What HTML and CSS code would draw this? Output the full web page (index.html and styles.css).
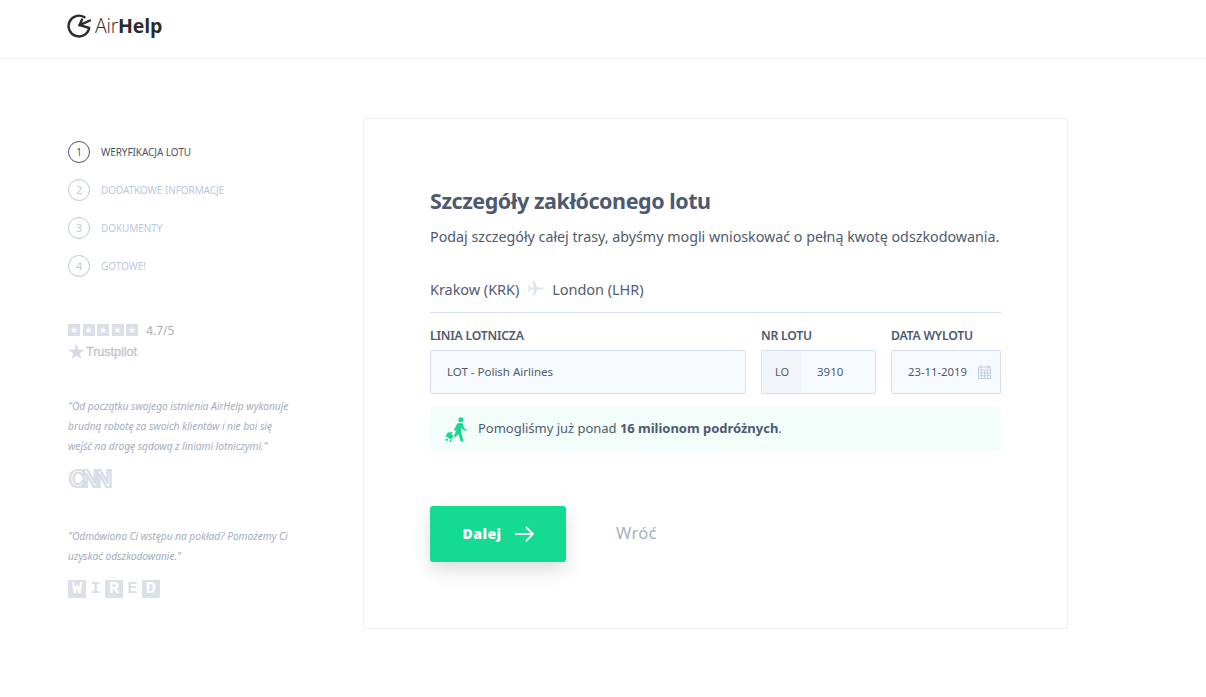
FILE: index.html
```html
<!DOCTYPE html>
<html lang="pl">
<head>
<meta charset="utf-8">
<title>AirHelp</title>
<link rel="stylesheet" href="styles.css">
</head>
<body>
<header class="topbar">
  <div class="logo">
    <svg class="logo-mark" width="24" height="24" viewBox="0 0 24 24" fill="none" stroke="#2b2b30" stroke-width="2.4" stroke-linecap="round" stroke-linejoin="round"><path d="M17.5 3.2A10.4 10.4 0 1 0 22.2 14"/><path d="M23 6.5 12.5 11.2 15 5.5"/><path d="M12.5 11.2 21 13.5"/></svg>
    <span class="logo-text"><span class="logo-light">Air</span><b>Help</b></span>
  </div>
</header>
<main class="page">
  <aside class="side">
    <ol class="steps">
      <li class="step active"><span class="num">1</span><span>WERYFIKACJA LOTU</span></li>
      <li class="step"><span class="num">2</span><span>DODATKOWE INFORMACJE</span></li>
      <li class="step"><span class="num">3</span><span>DOKUMENTY</span></li>
      <li class="step"><span class="num">4</span><span>GOTOWE!</span></li>
    </ol>
    <div class="rating">
      <span class="stars">
        <i class="star">★</i><i class="star">★</i><i class="star">★</i><i class="star">★</i><i class="star">★</i>
      </span>
      <span class="score">4.7/5</span>
    </div>
    <div class="trustpilot"><span class="tp-star">★</span><span>Trustpilot</span></div>
    <p class="quote first">"Od początku swojego istnienia AirHelp wykonuje brudną robotę za swoich klientów i nie boi się wejść na drogę sądową z liniami lotniczymi."</p>
    <div class="cnn">CNN</div>
    <p class="quote">"Odmówiono Ci wstępu na pokład? Pomożemy Ci uzyskać odszkodowanie."</p>
    <div class="wired"><span class="inv">W</span><span>I</span><span class="inv">R</span><span>E</span><span class="inv">D</span></div>
  </aside>
  <section class="card">
    <h1 class="title">Szczegóły zakłóconego lotu</h1>
    <p class="lead">Podaj szczegóły całej trasy, abyśmy mogli wnioskować o pełną kwotę odszkodowania.</p>
    <div class="route">
      <span>Krakow (KRK)</span>
      <svg class="plane" width="17" height="17" viewBox="0 0 18 18" fill="#dbe5ee"><path d="M17.500 9c0-.7-1-1.100-2-1.100h-4.200L7.200.4H5.700l2 7.500H3.600L2 5.600H.8L1.800 9l-1 3.400H2l1.600-2.300h4.100l-2 7.500h1.500l4.100-7.500h4.200c1 0 2-.4 2-1.100z"/></svg>
      <span>London (LHR)</span>
    </div>
    <div class="fields">
      <div class="field airline">
        <label class="label">LINIA LOTNICZA</label>
        <div class="input"><span class="value">LOT - Polish Airlines</span></div>
      </div>
      <div class="field flight">
        <label class="label">NR LOTU</label>
        <div class="input split"><span class="prefix">LO</span><span class="value">3910</span></div>
      </div>
      <div class="field date">
        <label class="label">DATA WYLOTU</label>
        <div class="input dated"><span class="value">23-11-2019</span>
          <svg class="cal" width="13" height="14" viewBox="0 0 13 14" fill="none" stroke="#c3d0e2"><rect x=".5" y="2" width="12" height="11.500"/><path d="M.5 5h12M.5 8h12M.5 10.800h12M3.500 5v8.500M6.500 5v8.500M9.500 5v8.500"/><path d="M3 .5v3M10 .5v3" stroke-width="1.600"/></svg>
        </div>
      </div>
    </div>
    <div class="notice">
      <svg class="walker" width="22" height="25" viewBox="0 0 22 25" fill="#17d88f"><circle cx="16" cy="2.800" r="2.600"/><path d="M12.500 6.200h5.300l1.300 5 2.700 1.300-.7 1.600-3.500-1.500-.9-2-.5 4.300 2.300 9.600h-2.800l-2.200-7.600-2.900 3.400-1.700-1.300 2.800-6.200-1.500 1.200-1.300-1z"/><path d="M5.700 14.500l1.800 1.200-1 1.500 2.300 1.500-2.700 4-5.600-3.700 2.700-4 1.500 1z"/><circle cx="1.800" cy="22.800" r="1.200"/><circle cx="5.500" cy="24" r="1"/></svg>
      <span>Pomogliśmy już ponad <b>16 milionom podróżnych</b>.</span>
    </div>
    <div class="actions">
      <button class="next" type="button">Dalej
        <svg width="19" height="16" viewBox="0 0 19 16" fill="none" stroke="#fff" stroke-width="1.800" stroke-linecap="round" stroke-linejoin="round"><path d="M1 8h17M11.500 1.500 18 8l-6.500 6.500"/></svg>
      </button>
      <a class="back">Wróć</a>
    </div>
  </section>
</main>
</body>
</html>
```
FILE: styles.css
```css
* { box-sizing: border-box; }
html, body { margin: 0; padding: 0; }
body {
  background: #fff;
  color: #4e5a70;
  font-family: "Noto Sans", "Open Sans", sans-serif;
  height: 697px;
  overflow: hidden;
}
.topbar {
  height: 59px;
  border-bottom: 1px solid #f0f1f3;
  padding: 14px 0 0 67px;
}
.logo { display: flex; align-items: center; gap: 4px; height: 24px; }
.logo-text { font-family: "Open Sans", sans-serif; font-size: 19.500px; color: #2b2b30; letter-spacing: -.2px; line-height: 24px; }
.logo-light { font-weight: 300; }
.logo-text b { font-weight: 700; }
.page {
  display: flex;
  padding: 59px 0 0 68px;
}
.side { width: 295px; padding-top: 23px; flex: none; }
.steps { list-style: none; margin: 0; padding: 0; display: flex; flex-direction: column; gap: 16px; }
.step {
  display: flex;
  align-items: center;
  gap: 11px;
  height: 22px;
  font-size: 10px;
  letter-spacing: -.08px;
  color: #bcc8dc;
}
.num {
  width: 22px; height: 22px;
  border: 1px solid #bcc8dc;
  border-radius: 50%;
  display: flex; align-items: center; justify-content: center;
  font-size: 10px;
  flex: none;
}
.step.active { color: #4b5365; }
.step.active .num { border-color: #4b5365; }
.rating { display: flex; align-items: center; margin-top: 46px; height: 14px; }
.stars { display: flex; gap: 2.500px; }
.star {
  width: 12px; height: 12px;
  background: #dbe0e8;
  color: #fff;
  font-style: normal;
  font-size: 9px;
  line-height: 12px;
  text-align: center;
  font-family: "DejaVu Sans", sans-serif;
}
.score { margin-left: 8px; font-size: 12px; color: #a9aeb8; letter-spacing: .05px; }
.trustpilot { display: flex; align-items: center; margin-top: 6px; height: 18px; font-size: 12.500px; color: #bfc4cc; font-family: "Liberation Sans", sans-serif; font-weight: 400; -webkit-text-stroke: .3px #bfc4cc; }
.tp-star { font-size: 21px; color: #d5dbe4; font-family: "DejaVu Sans", sans-serif; width: 19px; line-height: 18px; margin-left: -1px; -webkit-text-stroke: 0; }
.quote {
  margin: 0;
  width: 225px;
  font-size: 10.300px;
  line-height: 20px;
  font-style: italic;
  color: #a3aebf;
  letter-spacing: -.08px;
}
.quote.first { margin-top: 35px; }
.cnn {
  margin: 11px 0 35px;
  height: 24px;
  font: 700 24px/24px "Liberation Sans", sans-serif;
  color: #fff;
  -webkit-text-stroke: 2.200px #d8dee8;
  letter-spacing: -4.400px;
  padding-left: 1px;
}
.wired { display: flex; height: 18px; margin-top: 14px; width: 92px; font: 700 17px/18px "Liberation Mono", monospace; }
.wired span { flex: 1; text-align: center; color: #dbe1e9; }
.wired .inv { background: #dbe1e9; color: #fff; }
.card {
  width: 705px;
  height: 511px;
  border: 1px solid #edeff5;
  border-radius: 2px;
  padding: 67px 66px 0;
}
.title { margin: 0; font-size: 21.500px; line-height: 30px; font-weight: 700; color: #4e5a70; letter-spacing: -.45px; }
.lead { margin: 9px 0 0; font-size: 14.310px; line-height: 24px; color: #4e5a70; letter-spacing: -.02px; white-space: nowrap; }
.route {
  margin-top: 28px;
  height: 36px;
  padding-top: 2px;
  border-bottom: 1px solid #d5e0ee;
  display: flex;
  align-items: flex-start;
  gap: 8px;
  font-size: 14.500px;
  line-height: 20px;
  color: #525d70;
  letter-spacing: -.05px;
}
.plane { margin-top: 1px; }
.fields { display: flex; gap: 15px; margin-top: 14px; }
.field { display: flex; flex-direction: column; }
.airline { width: 316px; }
.flight { width: 115px; }
.date { width: 110px; }
.label { font-size: 12.200px; line-height: 18px; font-weight: 600; color: #4e5a70; letter-spacing: -.2px; margin-bottom: 5px; white-space: nowrap; }
.input {
  height: 44px;
  background: #f7fafe;
  border: 1px solid #d3e0f2;
  border-radius: 2px;
  display: flex;
  align-items: center;
  font-size: 11.500px;
  color: #4e5a70;
  padding-left: 16px;
}
.input .value { margin-top: -2px; }
.split { padding-left: 0; }
.prefix { width: 40px; height: 100%; background: #f2f5fa; display: flex; align-items: center; justify-content: center; font-size: 11px; padding-bottom: 2px; }
.split .value { margin-left: 15px; }
.dated { justify-content: space-between; padding-right: 9px; font-size: 11.300px; }
.notice {
  margin-top: 13px;
  height: 44px;
  background: #f3fefb;
  border-radius: 2px;
  display: flex;
  align-items: center;
  gap: 11px;
  padding-left: 15px;
  font-size: 13px;
  color: #4e5a70;
  letter-spacing: -.02px;
}
.notice span { margin-top: -2px; }
.notice b { font-weight: 700; }
.actions { display: flex; align-items: center; margin-top: 55px; }
.next {
  width: 136px; height: 56px;
  background: #14da92;
  border: 0;
  border-radius: 3px;
  color: #fff;
  font-family: "Noto Sans", sans-serif;
  font-weight: 900;
  font-size: 14px;
  letter-spacing: .5px;
  box-shadow: 0 8px 18px rgba(60, 70, 90, .18);
  display: flex; align-items: center; justify-content: center; gap: 13px;
  padding: 0 0 1px;
}
.back { margin: -3px 0 0 50px; font-size: 16.500px; color: #a5b0c2; letter-spacing: .3px; }
```
